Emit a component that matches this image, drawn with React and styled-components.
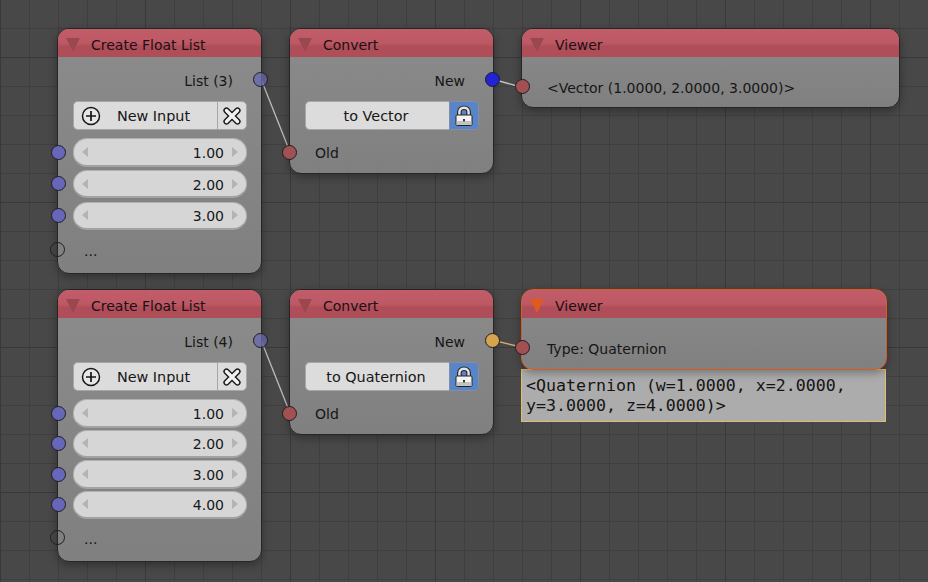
import React from 'react'
import styled, { createGlobalStyle } from 'styled-components'

const GlobalStyle = createGlobalStyle`
    html, body {
        margin: 0;
        padding: 0;
        background: #484848;
    }
`

const Canvas = styled.div`
    position: relative;
    width: 928px;
    height: 582px;
    overflow: hidden;
    font-family: "DejaVu Sans", sans-serif;
    font-size: 14px;
    color: #161616;
    background-color: #484848;
    background-image:
        linear-gradient(to right, #393939 1px, transparent 1px),
        linear-gradient(to bottom, #393939 1px, transparent 1px),
        linear-gradient(to right, #3f3f3f 1px, transparent 1px),
        linear-gradient(to bottom, #3f3f3f 1px, transparent 1px);
    background-size: 145px 145px, 145px 145px, 29px 29px, 29px 29px;
    background-position: 0 0, 0 57px, 0 0, 0 28px;
`

const WireLayer = styled.svg`
    position: absolute;
    left: 0;
    top: 0;
`

const NodeSlot = styled.div`
    position: absolute;
    left: ${p => p.$x}px;
    top: ${p => p.$y}px;
    width: ${p => p.$w}px;
    display: flex;
    flex-direction: column;
`

const Node = styled.section`
    position: relative;
    box-sizing: border-box;
    height: ${p => p.$h}px;
    display: flex;
    flex-direction: column;
    border: 1px solid ${p => p.$selected ? '#dc5a1e' : '#262626'};
    border-radius: 12px;
    box-shadow: 0 3px 9px rgba(0, 0, 0, .32);
    background: linear-gradient(to bottom, rgba(142, 142, 142, .96), rgba(130, 130, 130, .96));
`

const Header = styled.header`
    height: 28px;
    flex: none;
    box-sizing: border-box;
    display: flex;
    align-items: center;
    gap: 11px;
    padding: 3px 0 0 8px;
    border-radius: 11px 11px 0 0;
    background: linear-gradient(to bottom, #c15c68 0, #bd5965 50%, #af4e58 62%, #af4e58 100%);
`

const Arrow = styled.span`
    width: 0;
    height: 0;
    margin-top: 1px;
    border-left: 7px solid transparent;
    border-right: 7px solid transparent;
    border-top: 14px solid ${p => p.$selected ? '#e05a1e' : '#9a4750'};
`

const Title = styled.span`
    font-size: 14px;
    color: #1c1014;
`

const Body = styled.div`
    flex: 1;
    display: flex;
    flex-direction: column;
    padding: 9px 14px 0 15px;
`

const Row = styled.div`
    position: relative;
    box-sizing: border-box;
    height: 28px;
    flex: none;
    display: flex;
    align-items: center;
    justify-content: ${p => p.$right ? 'flex-end' : 'flex-start'};
    margin-top: ${p => p.$top || 0}px;
    padding: ${p => p.$right ? '2px 14px 0 0' : '0 0 0 10px'};
`

const Socket = styled.i`
    position: absolute;
    box-sizing: border-box;
    top: ${p => p.$top}px;
    ${p => p.$side === 'right' ? 'right: -21px' : `left: ${p.$left ?? -23}px`};
    width: 15px;
    height: 15px;
    border-radius: 50%;
    border: 1px solid #1e1e1e;
    background: ${p => p.$color};
`

const ButtonRow = styled.div`
    display: flex;
    height: 29px;
    flex: none;
    margin-top: 7px;
    font-size: 14.4px;
`

const Button = styled.div`
    position: relative;
    box-sizing: border-box;
    flex: 1;
    display: flex;
    align-items: center;
    justify-content: center;
    padding: ${p => p.$icon ? '0 0 0 16px' : '0 3px 0 0'};
    background: #dcdcdc;
    border: 1px solid #a6a6a6;
    border-right: 0;
    border-radius: 5px 0 0 5px;
`

const IconButton = styled.div`
    box-sizing: border-box;
    width: 30px;
    flex: none;
    display: flex;
    align-items: center;
    justify-content: center;
    background: ${p => p.$active ? '#5a84c8' : '#dcdcdc'};
    border: 1px solid ${p => p.$active ? '#7f8fa8' : '#a6a6a6'};
    border-radius: 0 5px 5px 0;
`

const PlusIcon = styled.svg`
    position: absolute;
    left: 7px;
    top: 4px;
`

const Fields = styled.div`
    display: flex;
    flex-direction: column;
    gap: ${p => p.$gap}px;
    margin-top: 8px;
`

const Field = styled.div`
    position: relative;
    box-sizing: border-box;
    height: 28.5px;
    display: flex;
    align-items: center;
    justify-content: space-between;
    padding: 0 8px;
    background: #d6d6d6;
    border: 1px solid #b0b0b0;
    border-bottom: 2px solid #a2a2a2;
    border-radius: 14px;
`

const Tip = styled.span`
    width: 0;
    height: 0;
    border-top: 5.5px solid transparent;
    border-bottom: 5.5px solid transparent;
    ${p => p.$dir === 'left' ? 'border-right' : 'border-left'}: 6.5px solid #b4b4b4;
`

const FieldValue = styled.span`
    margin-left: auto;
    margin-right: 8px;
    padding-top: 2px;
`

const Dots = styled.span`
    position: relative;
    top: 1px;
    left: 1px;
`

const ViewerText = styled.div`
    position: relative;
    padding: 23px 0 0 25px;
    font-size: 14px;
`

const OutputBox = styled.div`
    box-sizing: border-box;
    height: 53px;
    width: 365px;
    margin-top: -1px;
    padding: 6px 0 0 4px;
    font-family: "DejaVu Sans Mono", monospace;
    font-size: 16.6px;
    line-height: 20px;
    color: #141414;
    background: rgba(176, 176, 176, .97);
    border: 1px solid #e8bb68;
`

function CrossIcon() {
    return <svg width="20" height="20" viewBox="0 0 20 20">
        <path d="M4.5 4.5 L15.5 15.5 M15.5 4.5 L4.5 15.5" stroke="#1a1a1a" strokeWidth="6.2" strokeLinecap="round" />
        <path d="M4.5 4.5 L15.5 15.5 M15.5 4.5 L4.5 15.5" stroke="#f2f2f2" strokeWidth="3.4" strokeLinecap="round" />
    </svg>
}

function LockIcon() {
    return <svg width="18" height="22" viewBox="0 0 18 22">
        <path d="M4.4 11 V6.8 C4.4 1.4 13.6 1.4 13.6 6.8 V11" fill="none" stroke="#262626" strokeWidth="4.6" />
        <path d="M4.4 11 V6.8 C4.4 1.4 13.6 1.4 13.6 6.8 V11" fill="none" stroke="#e4e4e4" strokeWidth="2.4" />
        <rect x="1" y="10" width="16" height="10.5" rx="1.2" fill="#f4f4f4" stroke="#222" />
        <rect x="1.7" y="16" width="14.6" height="4" fill="#c4c4c4" />
        <rect x="8" y="14" width="2" height="2.4" fill="#333" />
    </svg>
}

function AddIcon() {
    return <PlusIcon width="20" height="20" viewBox="0 0 20 20">
        <circle cx="10" cy="10" r="8.5" fill="#e6e6e6" stroke="#151515" strokeWidth="1.5" />
        <path d="M10 5 V15 M5 10 H15" stroke="#151515" strokeWidth="1.7" />
    </PlusIcon>
}

const INPUT = '#6767ba'
const OUTPUT = 'rgba(104, 104, 178, .75)'
const RED = '#a15153'

function FloatListNode({ x, y, h, values, gap, dotsTop, count }) {
    return <NodeSlot $x={x} $y={y} $w={205}>
        <Node $h={h}>
            <Header><Arrow /><Title>Create Float List</Title></Header>
            <Body>
                <Row $right>List ({count})<Socket $side="right" $top={6} $color={OUTPUT} /></Row>
                <ButtonRow>
                    <Button $icon><AddIcon />New Input</Button>
                    <IconButton><CrossIcon /></IconButton>
                </ButtonRow>
                <Fields $gap={gap}>
                    {values.map(v => <Field key={v}>
                        <Socket $top={5.5} $color={INPUT} />
                        <Tip $dir="left" />
                        <FieldValue>{v}</FieldValue>
                        <Tip $dir="right" />
                    </Field>)}
                </Fields>
                <Row $top={dotsTop}>
                    <Socket $top={5.5} $color="transparent" />
                    <Dots>...</Dots>
                </Row>
            </Body>
        </Node>
    </NodeSlot>
}

function ConvertNode({ x, y, label, newColor }) {
    return <NodeSlot $x={x} $y={y} $w={205}>
        <Node $h={146}>
            <Header><Arrow /><Title>Convert</Title></Header>
            <Body>
                <Row $right>New<Socket $side="right" $top={6} $color={newColor} /></Row>
                <ButtonRow>
                    <Button>{label}</Button>
                    <IconButton $active><LockIcon /></IconButton>
                </ButtonRow>
                <Row $top={9}>
                    <Socket $top={6} $color={RED} />
                    Old
                </Row>
            </Body>
        </Node>
    </NodeSlot>
}

function ViewerNode({ x, y, w, selected, text, output }) {
    return <NodeSlot $x={x} $y={y} $w={w}>
        <Node $h={selected ? 81 : 80} $selected={selected}>
            <Header><Arrow $selected={selected} /><Title>Viewer</Title></Header>
            <ViewerText>
                <Socket $top={22} $left={-7.5} $color={RED} />
                {text}
            </ViewerText>
        </Node>
        {output && <OutputBox>{output}</OutputBox>}
    </NodeSlot>
}

function Wires() {
    return <WireLayer width="928" height="582">
        <line x1="261" y1="79" x2="290" y2="152" stroke="#bdbdbd" strokeWidth="1.3" />
        <line x1="492" y1="79" x2="521" y2="87" stroke="#c4c4c4" strokeWidth="1.3" />
        <line x1="261" y1="340" x2="290" y2="413" stroke="#bdbdbd" strokeWidth="1.3" />
        <line x1="492" y1="340" x2="521" y2="347" stroke="#dcb070" strokeWidth="1.3" />
    </WireLayer>
}

export default function App() {
    return <Canvas>
        <GlobalStyle />
        <Wires />
        <FloatListNode x={57} y={28} h={246} count={3} values={['1.00', '2.00', '3.00']} gap={3.25} dotsTop={6} />
        <ConvertNode x={289} y={28} label="to Vector" newColor="#2222d6" />
        <ViewerNode x={521} y={28} w={379} text="<Vector (1.0000, 2.0000, 3.0000)>" />
        <FloatListNode x={57} y={289} h={273} count={4} values={['1.00', '2.00', '3.00', '4.00']} gap={2} dotsTop={5} />
        <ConvertNode x={289} y={289} label="to Quaternion" newColor="#d6a34e" />
        <ViewerNode x={521} y={289} w={366} selected text="Type: Quaternion" output="<Quaternion (w=1.0000, x=2.0000, y=3.0000, z=4.0000)>" />
    </Canvas>
}
